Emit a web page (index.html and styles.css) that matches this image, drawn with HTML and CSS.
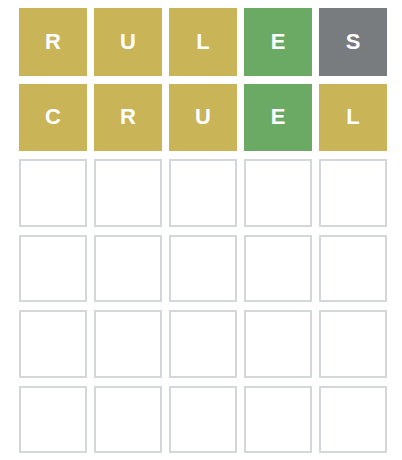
FILE: index.html
```html
<!DOCTYPE html>
<html>
<head>
<meta charset="utf-8">
<link rel="stylesheet" href="styles.css">
</head>
<body>
<div class="board">
  <div class="tile present">R</div>
  <div class="tile present">U</div>
  <div class="tile present">L</div>
  <div class="tile correct">E</div>
  <div class="tile absent">S</div>
  <div class="tile present">C</div>
  <div class="tile present">R</div>
  <div class="tile present">U</div>
  <div class="tile correct">E</div>
  <div class="tile present">L</div>
  <div class="tile empty"></div><div class="tile empty"></div><div class="tile empty"></div><div class="tile empty"></div><div class="tile empty"></div>
  <div class="tile empty"></div><div class="tile empty"></div><div class="tile empty"></div><div class="tile empty"></div><div class="tile empty"></div>
  <div class="tile empty"></div><div class="tile empty"></div><div class="tile empty"></div><div class="tile empty"></div><div class="tile empty"></div>
  <div class="tile empty"></div><div class="tile empty"></div><div class="tile empty"></div><div class="tile empty"></div><div class="tile empty"></div>
</div>
</body>
</html>
```
FILE: styles.css
```css
html, body {
  margin: 0;
  padding: 0;
  background: #ffffff;
}
body {
  padding: 8px 0 0 19px;
  font-family: "Liberation Sans", Arial, sans-serif;
}
.board {
  display: grid;
  grid-template-columns: repeat(5, 68px);
  grid-template-rows: repeat(6, 67.5px);
  column-gap: 7px;
  row-gap: 8px;
}
.tile {
  box-sizing: border-box;
  display: flex;
  align-items: center;
  justify-content: center;
  color: #ffffff;
  font-weight: bold;
  font-size: 22px;
  text-transform: uppercase;
}
.present { background: #c9b458; }
.correct { background: #6aaa64; }
.absent { background: #787c7e; }
.empty {
  border: 2px solid #d3d6da;
  background: #ffffff;
}
```
